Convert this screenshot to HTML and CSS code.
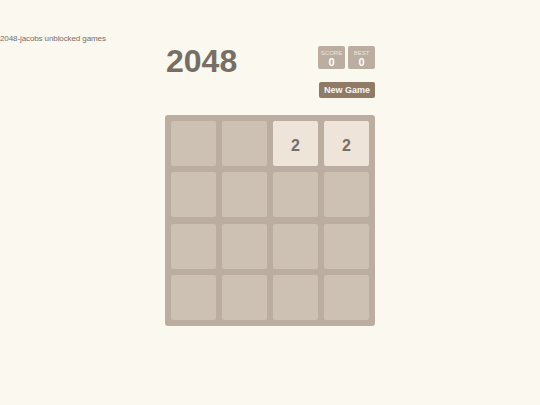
FILE: index.html
```html
<!DOCTYPE html>
<html>
<head>
<meta charset="utf-8">
<title>2048</title>
<link rel="stylesheet" href="styles.css">
</head>
<body>
<p class="caption">2048-jacobs unblocked games</p>
<div class="container">
  <div class="header">
    <h1 class="title">2048</h1>
    <div class="controls">
      <div class="scores">
        <div class="score-box"><span class="label">SCORE</span><span class="value">0</span></div>
        <div class="score-box"><span class="label">BEST</span><span class="value">0</span></div>
      </div>
      <button class="new-game">New Game</button>
    </div>
  </div>
  <div class="board">
    <div class="cell"></div><div class="cell"></div><div class="cell tile-2">2</div><div class="cell tile-2">2</div>
    <div class="cell"></div><div class="cell"></div><div class="cell"></div><div class="cell"></div>
    <div class="cell"></div><div class="cell"></div><div class="cell"></div><div class="cell"></div>
    <div class="cell"></div><div class="cell"></div><div class="cell"></div><div class="cell"></div>
  </div>
</div>
</body>
</html>
```
FILE: styles.css
```css
html, body {
  margin: 0;
  padding: 0;
  background: #faf8ef;
  font-family: "Liberation Sans", Arial, sans-serif;
  color: #776e65;
}
.caption {
  margin: 35px 0 0;
  font-size: 8px;
  line-height: 8px;
  letter-spacing: -0.1px;
  color: #776e65;
}
.container {
  width: 210px;
  margin: -1px auto 0;
}
.header {
  display: flex;
  justify-content: space-between;
  align-items: flex-start;
}
.title {
  margin: 3px 0 0;
  font-size: 32px;
  line-height: 32px;
  font-weight: bold;
  color: #776e65;
  padding-left: 1px;
}
.controls {
  margin-top: 4px;
  display: flex;
  flex-direction: column;
  align-items: flex-end;
}
.scores {
  display: flex;
  gap: 3px;
}
.score-box {
  width: 27px;
  height: 23px;
  background: #bbada0;
  border-radius: 2px;
  display: flex;
  flex-direction: column;
  align-items: center;
  box-sizing: border-box;
  padding-top: 4px;
}
.label {
  font-size: 6px;
  line-height: 7px;
  color: #eee4da;
}
.value {
  font-size: 11px;
  line-height: 10px;
  font-weight: bold;
  color: #ffffff;
}
.new-game {
  margin-top: 13px;
  width: 56px;
  height: 16px;
  border: 0;
  padding: 0;
  background: #8f7a66;
  color: #f9f6f2;
  font-family: "Liberation Sans", Arial, sans-serif;
  font-size: 9px;
  font-weight: bold;
  border-radius: 2px;
}
.board {
  margin-top: 17px;
  background: #bbada0;
  border-radius: 3px;
  padding: 6px;
  display: grid;
  grid-template-columns: repeat(4, 45px);
  grid-auto-rows: 45px;
  column-gap: 6px;
  row-gap: 6.33px;
  box-sizing: border-box;
  height: 211px;
}
.cell {
  background: #cdc1b4;
  border-radius: 2px;
  display: flex;
  align-items: center;
  justify-content: center;
}
.tile-2 {
  background: #eee4da;
  color: #776e65;
  font-size: 16px;
  font-weight: bold;
  padding-top: 5px;
  box-sizing: border-box;
}
```
